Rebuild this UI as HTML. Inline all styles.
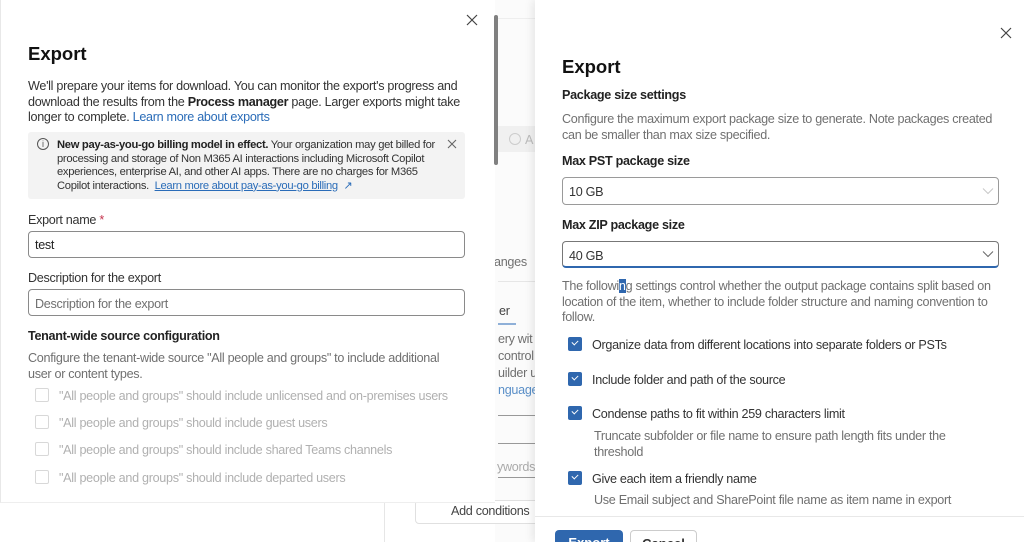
<!DOCTYPE html>
<html><head><meta charset="utf-8"><style>
*{margin:0;padding:0;box-sizing:border-box}
html,body{width:1024px;height:542px;overflow:hidden}
body{position:relative;background:#fff;font-family:"Liberation Sans",sans-serif;color:#242424}
.a{position:absolute;white-space:nowrap}
.t13{font-size:12.6px;letter-spacing:-0.3px}
.t12{font-size:11.2px;letter-spacing:-0.3px}
.b{font-weight:bold}
.g{color:#707070}
.lg{color:#b0b0b0}
.inp{position:absolute;border:1px solid #8a8a8a;border-radius:4px;background:#fff}
.cb{position:absolute;width:14px;height:14px;border-radius:2px}
.cb.off{border:1px solid #d8d8d8}
.cb.on{background:#2f67ae}
.cb.on:after{content:"";position:absolute;left:4px;top:3px;width:5px;height:3px;border-left:1.4px solid #fff;border-bottom:1.4px solid #fff;transform:rotate(-45deg)}
</style></head><body>
<div class="a" style="left:495px;top:0;width:40px;height:542px;background:#fbfbfb"></div>
<div class="a" style="left:498px;top:18px;width:37px;height:1px;background:#eee"></div>
<div class="a" style="left:498px;top:126px;width:37px;height:26px;background:#f0f0f0"></div>
<div class="a" style="left:509px;top:133px;width:12px;height:12px;border:1px solid #ccc;border-radius:50%"></div>
<div class="a t13" style="left:525px;top:133px;color:#bbb">A</div>
<div class="a t13 g" style="left:494px;top:255px">anges</div>
<div class="a" style="left:498px;top:281px;width:37px;height:1px;background:#e6e6e6"></div>
<div class="a t13" style="left:499px;top:304px;color:#444">er</div>
<div class="a" style="left:498px;top:323px;width:18px;height:2px;background:#8fb0d8"></div>
<div class="a t13 g" style="left:498px;top:331px;line-height:17px">ery wit<br>control<br>uilder u<br><span style="color:#5a8fc8">nguage</span></div>
<div class="a" style="left:498px;top:415px;width:37px;height:1px;background:#999"></div>
<div class="a" style="left:498px;top:443px;width:37px;height:1px;background:#999"></div>
<div class="a t13" style="left:497px;top:460px;color:#aaa">ywords</div>
<div class="a" style="left:498px;top:477px;width:37px;height:1px;background:#999"></div>
<div class="a" style="left:384px;top:503px;width:1px;height:39px;background:#e6e6e6"></div>
<div class="a" style="left:415px;top:500px;width:125px;height:24px;border:1px solid #e0e0e0;border-radius:4px;background:#fff"></div>
<div class="a t13" style="left:451px;top:504px;color:#444">Add conditions</div>
<div class="a" style="left:0;top:0;width:495px;height:503px;background:#fff;border-left:1px solid #e8e8e8;border-bottom:1px solid #eee"></div>
<div class="a" style="left:494px;top:15px;width:4px;height:150px;background:#808080;border-radius:2px"></div>
<svg class="a" style="left:466px;top:14px" width="12" height="12"><path d="M1 1L11 11M11 1L1 11" stroke="#444" stroke-width="1.2"/></svg>
<div class="a b" style="left:28px;top:43px;font-size:18.5px;color:#111">Export</div>
<div class="a t13" style="left:28px;top:79px;line-height:15.7px;color:#333">We'll prepare your items for download. You can monitor the export's progress and<br>download the results from the <b style="color:#222">Process manager</b> page. Larger exports might take<br>longer to complete. <span style="color:#2a6cb8">Learn more about exports</span></div>
<div class="a" style="left:28px;top:132px;width:437px;height:67px;background:#f3f3f3;border-radius:3px"></div>
<div class="a" style="left:37px;top:138px;width:12px;height:12px;border:1px solid #555;border-radius:50%;font-size:9px;text-align:center;line-height:10px;color:#555">i</div>
<svg class="a" style="left:447px;top:139px" width="10" height="10"><path d="M1 1L9 9M9 1L1 9" stroke="#666" stroke-width="1.1"/></svg>
<div class="a t12" style="left:57px;top:139px;line-height:13.6px;color:#333"><b style="color:#222">New pay-as-you-go billing model in effect.</b> Your organization may get billed for<br>processing and storage of Non M365 AI interactions including Microsoft Copilot<br>experiences, enterprise AI, and other AI apps. There are no charges for M365<br>Copilot interactions. &nbsp;<span style="color:#2a6cb8;text-decoration:underline">Learn more about pay-as-you-go billing</span> &nbsp;<span style="color:#2a6cb8">&#x2197;</span></div>
<div class="a t13" style="left:28px;top:213px;color:#333">Export name <span style="color:#c4314b">*</span></div>
<div class="inp" style="left:28px;top:231px;width:437px;height:27px"></div>
<div class="a t13" style="left:35px;top:238px;color:#222">test</div>
<div class="a t13" style="left:28px;top:271px;color:#333">Description for the export</div>
<div class="inp" style="left:28px;top:289px;width:437px;height:27px"></div>
<div class="a t13 g" style="left:35px;top:297px">Description for the export</div>
<div class="a t13 b" style="left:28px;top:329px;color:#222">Tenant-wide source configuration</div>
<div class="a t13 g" style="left:28px;top:351px;line-height:15.7px">Configure the tenant-wide source "All people and groups" to include additional<br>user or content types.</div>
<div class="cb off" style="left:35px;top:388px"></div><div class="a t13 lg" style="left:59px;top:389px">"All people and groups" should include unlicensed and on-premises users</div>
<div class="cb off" style="left:35px;top:415px"></div><div class="a t13 lg" style="left:59px;top:416px">"All people and groups" should include guest users</div>
<div class="cb off" style="left:35px;top:442px"></div><div class="a t13 lg" style="left:59px;top:443px">"All people and groups" should include shared Teams channels</div>
<div class="cb off" style="left:35px;top:470px"></div><div class="a t13 lg" style="left:59px;top:471px">"All people and groups" should include departed users</div>
<div class="a" style="left:535px;top:0;width:489px;height:542px;background:#fff;box-shadow:-3px 0 8px rgba(0,0,0,0.08)"></div>
<svg class="a" style="left:1000px;top:27px" width="12" height="12"><path d="M1 1L11 11M11 1L1 11" stroke="#444" stroke-width="1.2"/></svg>
<div class="a b" style="left:562px;top:56px;font-size:18.5px;color:#111">Export</div>
<div class="a t13 b" style="left:562px;top:88px;color:#222">Package size settings</div>
<div class="a t13 g" style="left:562px;top:112px;line-height:15.7px">Configure the maximum export package size to generate. Note packages created<br>can be smaller than max size specified.</div>
<div class="a t13 b" style="left:562px;top:154px;color:#222">Max PST package size</div>
<div class="inp" style="left:562px;top:177px;width:437px;height:28px;border-color:#9a9a9a"></div>
<div class="a t13" style="left:569px;top:185px;color:#333">10 GB</div>
<svg class="a" style="left:982px;top:187px" width="12" height="8"><path d="M1 1.5L6 6.5L11 1.5" stroke="#c8c8c8" fill="none" stroke-width="1"/></svg>
<div class="a t13 b" style="left:562px;top:218px;color:#222">Max ZIP package size</div>
<div class="inp" style="left:562px;top:241px;width:437px;height:27px;border-color:#777;border-bottom:2px solid #2f67ae"></div>
<div class="a t13" style="left:569px;top:249px;color:#333">40 GB</div>
<svg class="a" style="left:982px;top:250px" width="12" height="8"><path d="M1 1.5L6 6.5L11 1.5" stroke="#666" fill="none" stroke-width="1"/></svg>
<div class="a t13 g" style="left:562px;top:279px;line-height:15.7px">The followi<span style="background:#2f67ae;color:#fff">n</span>g settings control whether the output package contains split based on<br>location of the item, whether to include folder structure and naming convention to<br>follow.</div>
<div class="cb on" style="left:568px;top:337px"></div><div class="a t13" style="left:592px;top:338px;color:#333">Organize data from different locations into separate folders or PSTs</div>
<div class="cb on" style="left:568px;top:372px"></div><div class="a t13" style="left:592px;top:373px;color:#333">Include folder and path of the source</div>
<div class="cb on" style="left:568px;top:406px"></div><div class="a t13" style="left:592px;top:407px;color:#333">Condense paths to fit within 259 characters limit</div>
<div class="a t13 g" style="left:594px;top:429px;line-height:15.7px">Truncate subfolder or file name to ensure path length fits under the<br>threshold</div>
<div class="cb on" style="left:568px;top:471px"></div><div class="a t13" style="left:592px;top:472px;color:#333">Give each item a friendly name</div>
<div class="a t13 g" style="left:594px;top:493px">Use Email subject and SharePoint file name as item name in export</div>
<div class="a" style="left:535px;top:516px;width:489px;height:1px;background:#e8e8e8"></div>
<div class="a" style="left:555px;top:530px;width:68px;height:30px;background:#2f67ae;border-radius:4px;color:#fff;font-size:13px;font-weight:bold;text-align:center;line-height:26px">Export</div>
<div class="a" style="left:630px;top:530px;width:67px;height:30px;border:1px solid #ccc;border-radius:4px;color:#333;font-size:13px;font-weight:bold;text-align:center;line-height:26px">Cancel</div>
</body></html>
